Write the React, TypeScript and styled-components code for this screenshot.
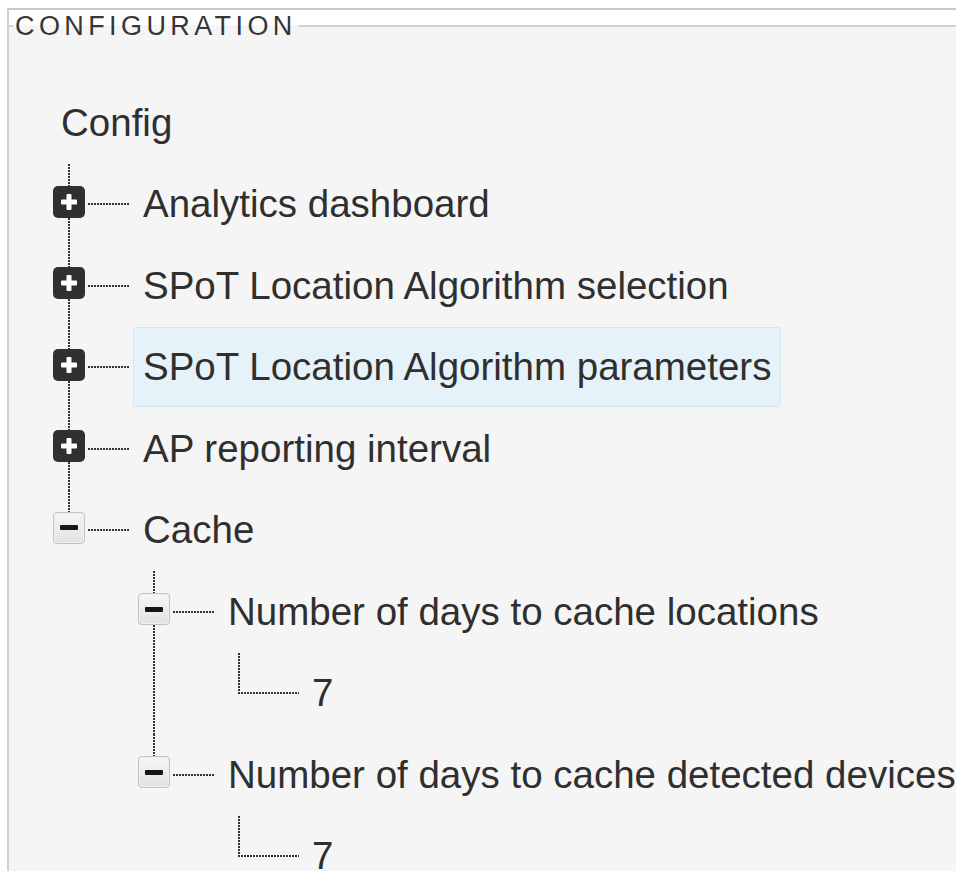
import React from "react";
import styled, { createGlobalStyle, css } from "styled-components";

const GlobalStyle = createGlobalStyle`
  html, body {
    margin: 0;
    padding: 0;
    background: #ffffff;
    overflow: hidden;
  }
  body {
    font-family: "Liberation Sans", Arial, sans-serif;
    color: #333333;
  }
`;

const dotsV = `repeating-linear-gradient(to bottom, #333333 0 2px, transparent 2px 3px)`;
const dotsH = `repeating-linear-gradient(to right, #333333 0 2px, transparent 2px 3px)`;

const Frame = styled.div`
  margin: 8px 0 0 7px;
  border-top: 2px solid #c8c8c8;
  border-left: 2px solid #d0d0d0;
  background: #ffffff;
  padding-top: 1px;
  height: calc(100vh - 8px);
  box-sizing: border-box;
  display: flex;
  flex-direction: column;
`;

const Panel = styled.fieldset`
  flex: 1;
  margin: 0;
  padding: 0 0 0 4px;
  border: none;
  border-top: 2px solid #d0d0d0;
  background: #f5f5f5;
  min-width: 0;
  overflow: hidden;
`;

const Legend = styled.legend`
  padding: 0 2px;
  font-size: 27px;
  line-height: 30px;
  letter-spacing: 4.4px;
  color: #363636;
  text-transform: uppercase;
`;

const Tree = styled.div`
  padding: 41px 0 0 38px;
`;

const RootLabel = styled.div`
  height: 81.5px;
  display: flex;
  align-items: center;
  padding-left: 10px;
  font-size: 38.5px;
  color: #2f2f2f;
`;

const Branch = styled.ul<{ $nested?: boolean }>`
  list-style: none;
  margin: 0;
  padding: 0 0 0 ${(p) => (p.$nested ? 85 : 2)}px;
`;

const Node = styled.li<{ $last: boolean }>`
  background-image: ${dotsV};
  background-repeat: no-repeat;
  background-position: 15px 0;
  background-size: 2px ${(p) => (p.$last ? "41px" : "100%")};
`;

const Row = styled.div`
  display: flex;
  align-items: center;
  height: 81.5px;
`;

const Toggle = styled.span<{ $open: boolean }>`
  flex: none;
  width: 32px;
  height: 32px;
  box-sizing: border-box;
  margin-bottom: 5px;
  display: flex;
  align-items: center;
  justify-content: center;
  ${(p) =>
    p.$open
      ? css`
          border-radius: 4px;
          border: 1px solid #c2c2c2;
          background: linear-gradient(#f6f6f6, #e2e2e2);
          box-shadow: inset 0 0 0 1px #f0f0f0;
        `
      : css`
          border-radius: 5px;
          background: #303030;
        `}
`;

const LeafSpacer = styled.span`
  flex: none;
  width: 15px;
`;

const Connector = styled.span<{ $leaf: boolean }>`
  flex: none;
  height: 2px;
  margin-left: ${(p) => (p.$leaf ? 0 : 3)}px;
  width: ${(p) => (p.$leaf ? 61 : 42)}px;
  background-image: ${dotsH};
`;

const Label = styled.span<{ $selected?: boolean }>`
  flex: none;
  margin-left: 3px;
  height: 80px;
  box-sizing: border-box;
  padding: 0 9px;
  border: 1px solid transparent;
  border-radius: 3px;
  display: flex;
  align-items: center;
  font-size: 38.5px;
  white-space: nowrap;
  color: #2f2f2f;
  ${(p) =>
    p.$selected &&
    css`
      background: #e6f2f9;
      border-color: #d6e6ef;
    `}
`;

type TreeItem = {
  label: string;
  open?: boolean;
  selected?: boolean;
  children?: TreeItem[];
};

const data: TreeItem[] = [
  { label: "Analytics dashboard", open: false, children: [] },
  { label: "SPoT Location Algorithm selection", open: false, children: [] },
  { label: "SPoT Location Algorithm parameters", open: false, selected: true, children: [] },
  { label: "AP reporting interval", open: false, children: [] },
  {
    label: "Cache",
    open: true,
    children: [
      { label: "Number of days to cache locations", open: true, children: [{ label: "7" }] },
      { label: "Number of days to cache detected devices", open: true, children: [{ label: "7" }] },
    ],
  },
];

const PlusIcon = () => (
  <svg width="16" height="16" viewBox="0 0 16 16" aria-hidden="true">
    <rect x="0" y="5.5" width="16" height="5" rx="1" fill="#ffffff" />
    <rect x="5.5" y="0" width="5" height="16" rx="1" fill="#ffffff" />
  </svg>
);

const MinusIcon = () => (
  <svg width="18" height="5" viewBox="0 0 18 5" aria-hidden="true">
    <rect x="0" y="0" width="18" height="5" rx="1" fill="#161616" />
  </svg>
);

const TreeNode: React.FC<{ item: TreeItem; last: boolean }> = ({ item, last }) => {
  const isLeaf = !item.children;
  return (
    <Node $last={last}>
      <Row>
        {isLeaf ? (
          <LeafSpacer />
        ) : (
          <Toggle $open={!!item.open}>{item.open ? <MinusIcon /> : <PlusIcon />}</Toggle>
        )}
        <Connector $leaf={isLeaf} />
        <Label $selected={item.selected}>{item.label}</Label>
      </Row>
      {item.open && item.children && item.children.length > 0 && (
        <Branch $nested>
          {item.children.map((c, i) => (
            <TreeNode key={i} item={c} last={i === item.children!.length - 1} />
          ))}
        </Branch>
      )}
    </Node>
  );
};

export default function App() {
  return (
    <>
      <GlobalStyle />
      <Frame>
        <Panel>
          <Legend>Configuration</Legend>
          <Tree>
            <RootLabel>Config</RootLabel>
            <Branch>
              {data.map((item, i) => (
                <TreeNode key={i} item={item} last={i === data.length - 1} />
              ))}
            </Branch>
          </Tree>
        </Panel>
      </Frame>
    </>
  );
}
